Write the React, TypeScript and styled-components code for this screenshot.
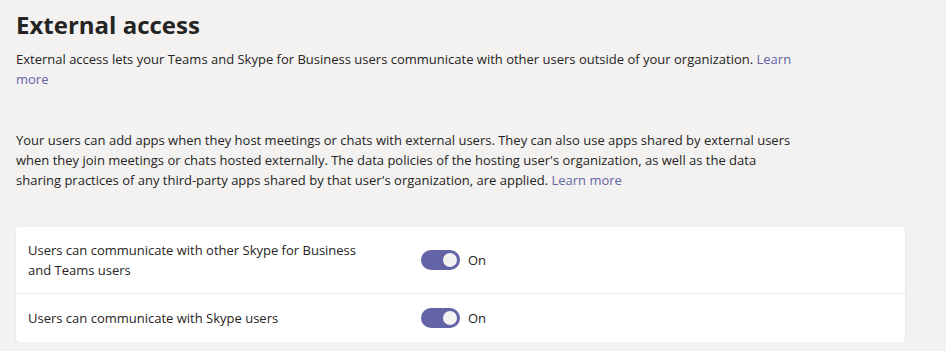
import React from "react";
import styled, { createGlobalStyle } from "styled-components";

const Global = createGlobalStyle`
  html, body { margin: 0; padding: 0; background: #f3f2f1; }
  body { font-family: "Segoe UI", "Open Sans", sans-serif; color: #252423; }
`;

const Page = styled.div`
  padding: 9px 16px 0 16px;
  width: 946px;
  box-sizing: border-box;
`;

const Title = styled.h1`
  margin: 0;
  font-size: 24px;
  font-weight: 700;
  line-height: 32px;
  color: #252423;
`;

const Para = styled.p<{ $gap: number }>`
  margin: ${(p) => p.$gap}px 0 0 0;
  max-width: 795px;
  font-size: 13px;
  line-height: 20px;
  color: #252423;
`;

const Link = styled.a`
  color: #6264a7;
  text-decoration: none;
`;

const Card = styled.div`
  margin-top: 37px;
  width: 889px;
  background: #ffffff;
  border-radius: 3px;
  box-shadow: 0 1px 2px rgba(0, 0, 0, 0.12);
`;

const Row = styled.div<{ $h: number; $divider?: boolean }>`
  display: flex;
  align-items: center;
  height: ${(p) => p.$h}px;
  padding: 0 12px;
  border-top: ${(p) => (p.$divider ? "1px solid #edebe9" : "none")};
`;

const LabelCell = styled.div`
  width: 393px;
  flex: none;
`;

const Label = styled.div`
  max-width: 350px;
  font-size: 13px;
  line-height: 20px;
  color: #252423;
`;

const Toggle = styled.div`
  display: flex;
  align-items: center;
  gap: 8px;
  font-size: 13px;
  color: #252423;
`;

const Track = styled.span`
  width: 39px;
  height: 20px;
  border-radius: 10px;
  background: #6264a7;
  display: flex;
  align-items: center;
  justify-content: flex-end;
  padding: 0 3px;
  box-sizing: border-box;
`;

const Knob = styled.span`
  width: 14px;
  height: 14px;
  border-radius: 50%;
  background: #f3f2f1;
`;

const Switch = ({ label }: { label: string }) => (
  <Toggle>
    <Track>
      <Knob />
    </Track>
    <span>{label}</span>
  </Toggle>
);

export default function App() {
  return (
    <>
      <Global />
      <Page>
        <Title>External access</Title>
        <Para $gap={8}>
          External access lets your Teams and Skype for Business users communicate with other users outside of your
          organization. <Link>Learn more</Link>
        </Para>
        <Para $gap={41}>
          Your users can add apps when they host meetings or chats with external users. They can also use apps shared
          by external users when they join meetings or chats hosted externally. The data policies of the hosting
          user's organization, as well as the data
          <br />
          sharing practices of any third-party apps shared by that user's organization, are applied.{" "}
          <Link>Learn more</Link>
        </Para>
        <Card>
          <Row $h={66}>
            <LabelCell>
              <Label>Users can communicate with other Skype for Business and Teams users</Label>
            </LabelCell>
            <Switch label="On" />
          </Row>
          <Row $h={48} $divider>
            <LabelCell>
              <Label>Users can communicate with Skype users</Label>
            </LabelCell>
            <Switch label="On" />
          </Row>
        </Card>
      </Page>
    </>
  );
}
